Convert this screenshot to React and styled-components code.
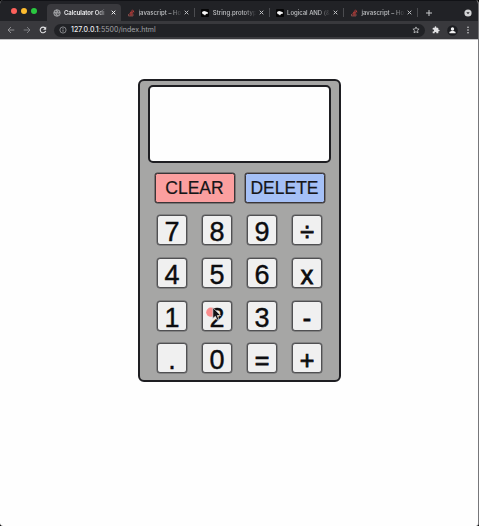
import React from 'react';
import styled, { createGlobalStyle } from 'styled-components';

const GlobalStyle = createGlobalStyle`
  * { box-sizing: border-box; }
  html, body { margin: 0; background: #000; overflow: hidden; }
`;

const Window = styled.div`
  width: 479px;
  height: 526px;
  display: flex;
  flex-direction: column;
  overflow: hidden;
  border-radius: 4px 4px 3px 3px;
  background: #fefefe;
  border-right: 1px solid #77777a;
  font-family: Inter, "Liberation Sans", sans-serif;
`;

const TabStrip = styled.header`
  height: 21px;
  flex: none;
  display: flex;
  align-items: flex-end;
  background: #212226;
  border-top: 1px solid #111216;
`;

const Lights = styled.div`
  width: 47px;
  height: 20px;
  padding: 0 0 1px 10.5px;
  display: flex;
  align-items: center;
  gap: 4px;
`;

const Light = styled.i`
  width: 6px;
  height: 6px;
  border-radius: 50%;
  background: ${(p) => p.$color};
`;

const TabItem = styled.div`
  width: ${(p) => (p.$active ? '74px' : '74.3px')};
  height: 17px;
  padding-left: ${(p) => (p.$active ? '5.5px' : '6px')};
  display: flex;
  align-items: center;
  flex: none;
  border-radius: 4px 4px 0 0;
  background: ${(p) => (p.$active ? '#39393d' : 'transparent')};
  color: ${(p) => (p.$active ? '#f0f0f2' : '#bfc0c3')};
`;

const TabTitle = styled.span`
  width: 45px;
  margin-left: 3.5px;
  white-space: nowrap;
  font-size: 6px;
  font-weight: ${(p) => (p.$active ? 600 : 500)};
  line-height: 10px;
  letter-spacing: ${(p) => p.$spacing || '0'};
  mask-image: linear-gradient(to right, #000 72%, transparent 98%);
`;

const CloseIcon = styled.svg`
  width: 5px;
  height: 5px;
  margin-left: 1.5px;
  flex: none;
`;

const Separator = styled.i`
  width: 1px;
  height: 9px;
  margin-left: 5px;
  background: #4b4c50;
`;

const Icon = styled.svg`
  width: ${(p) => p.$size || 8}px;
  height: ${(p) => p.$size || 8}px;
  flex: none;
  display: block;
`;

const StripEnd = styled.div`
  flex: 1;
  height: 17px;
  display: flex;
  align-items: center;
  justify-content: space-between;
  padding: 0 6px 0 7px;
`;

const Toolbar = styled.nav`
  height: 18px;
  flex: none;
  display: flex;
  align-items: center;
  padding: 0 6px 0 7px;
  background: #39393d;
`;

const NavIcons = styled.div`
  display: flex;
  gap: 8px;
  width: 47px;
`;

const AddressBar = styled.div`
  width: 371px;
  height: 13px;
  display: flex;
  align-items: center;
  padding: 0 5px;
  border-radius: 7px;
  background: #212226;
`;

const Url = styled.span`
  flex: 1;
  margin-left: 4px;
  font-size: 7px;
  line-height: 12px;
  letter-spacing: 0.06px;
  color: #a3a4a8;
`;

const Host = styled.span`
  color: #ececee;
  font-weight: 500;
`;

const Actions = styled.div`
  flex: 1;
  display: flex;
  align-items: center;
  justify-content: space-between;
  padding-left: 7px;
`;

const Page = styled.main`
  flex: 1;
  padding: 39px 0 0 138px;
  border-top: 1px solid #c4c4c6;
`;

const Calculator = styled.section`
  width: 203px;
  height: 303px;
  display: flex;
  flex-direction: column;
  align-items: center;
  padding-top: 4px;
  border: 2px solid #1e1e22;
  border-radius: 6px;
  background: #a6a6a5;
  font-family: "Liberation Sans", Arial, sans-serif;
`;

const Display = styled.div`
  width: 183px;
  height: 78px;
  flex: none;
  border: 2px solid #1e1e22;
  border-radius: 5px;
  background: #fefefe;
`;

const Commands = styled.div`
  display: flex;
  gap: 10px;
  margin-top: 9.5px;
`;

const Command = styled.button`
  width: 80px;
  height: 30px;
  padding: 0;
  border: 1px solid #3a3537;
  border-radius: 2.5px;
  background: ${(p) => p.$color};
  color: #161618;
  font: 17.5px/28px "Liberation Sans", Arial, sans-serif;
  -webkit-text-stroke: 0.2px #161618;
  box-shadow: 0 0 0 0.5px #4a4648;
`;

const Keypad = styled.div`
  display: grid;
  grid-template-columns: repeat(4, 30px);
  grid-auto-rows: 30px;
  gap: 12.8px 15px;
  margin-top: 12.5px;
`;

const Key = styled.button`
  position: relative;
  padding: 2px 0 0;
  border: 1px solid #505052;
  border-radius: 3px;
  background: #f0f0f0;
  color: #0c0c0e;
  font: ${(p) => (p.$operator ? '25px' : '27px')}/28px "Liberation Sans", Arial, sans-serif;
  -webkit-text-stroke: ${(p) => (p.$operator ? '0.8px' : '0.4px')} #0c0c0e;
  box-shadow: 0 0 0 0.5px #606062;
`;

const Pointer = styled.svg`
  position: absolute;
  left: 2px;
  top: 4px;
  width: 18px;
  height: 20px;
`;

function Globe() {
  return (
    <Icon viewBox="0 0 16 16">
      <circle cx="8" cy="8" r="6.5" fill="#5c5d61" stroke="#b4b5b8" strokeWidth="1.6" />
      <path d="M2 6l4 2 1 3 2 3M6 2l3 2-2 3 4 1 3-2" fill="none" stroke="#b4b5b8" strokeWidth="1.8" />
    </Icon>
  );
}

function Stack() {
  return (
    <Icon viewBox="0 0 16 16">
      <path d="M3 10v4h9v-4" fill="none" stroke="#8e5351" strokeWidth="1.6" />
      <path d="M5 12h5.5M5 9.3l6 .8M6 6.3l5.5 2M8 3.4l4.5 4M11 1.5l3 5" stroke="#d8433f" strokeWidth="1.7" />
    </Icon>
  );
}

function Mdn() {
  return (
    <Icon viewBox="0 0 16 16">
      <rect width="16" height="16" rx="2" fill="#050506" />
      <path d="M2 6l4-2 4 1 4 2v2l-4 1-2 3-2-2-3-1z" fill="#f5f5f6" />
    </Icon>
  );
}

const favicons = { globe: Globe, stack: Stack, mdn: Mdn };

function Tab({ icon, title, active, spacing }) {
  const Favicon = favicons[icon];
  return (
    <TabItem $active={active}>
      <Favicon />
      <TabTitle $spacing={spacing} $active={active}>{title}</TabTitle>
      <CloseIcon viewBox="0 0 5 5">
        <path d="M.7.7l3.6 3.6M4.3.7L.7 4.3" stroke="currentColor" strokeWidth="1" />
      </CloseIcon>
      {!active && <Separator />}
    </TabItem>
  );
}

const keys = ['7', '8', '9', '÷', '4', '5', '6', 'x', '1', '2', '3', '-', '.', '0', '=', '+'];
const operators = '÷x-=+';

export default function App() {
  return (
    <>
      <GlobalStyle />
      <Window>
        <TabStrip>
          <Lights>
            <Light $color="#fc605b" />
            <Light $color="#fdbc2f" />
            <Light $color="#2ac840" />
          </Lights>
          <Tab icon="globe" title="Calculator Odi" active spacing="-0.05px" />
          <Tab icon="stack" title="javascript – Ho" spacing="0.03px" />
          <Tab icon="mdn" title="String.prototyp" spacing="0.03px" />
          <Tab icon="mdn" title="Logical AND (&" spacing="-0.03px" />
          <Tab icon="stack" title="javascript – Ho" spacing="0.03px" />
          <StripEnd>
            <Icon viewBox="0 0 8 8">
              <path d="M4 1v6M1 4h6" stroke="#c9cacc" strokeWidth="1" />
            </Icon>
            <Icon viewBox="0 0 8 8">
              <circle cx="4" cy="4" r="3.6" fill="#d2d3d5" />
              <path d="M2.3 3.2h3.4L4 5.2z" fill="#242529" />
            </Icon>
          </StripEnd>
        </TabStrip>
        <Toolbar>
          <NavIcons>
            <Icon viewBox="0 0 8 8">
              <path d="M7.3 4H1M4 1L1 4l3 3" fill="none" stroke="#98999c" strokeWidth=".9" />
            </Icon>
            <Icon viewBox="0 0 8 8">
              <path d="M.7 4H7M4 1l3 3-3 3" fill="none" stroke="#85868a" strokeWidth=".9" />
            </Icon>
            <Icon viewBox="0 0 8 8">
              <path d="M6.2 2.2A2.8 2.8 0 1 0 6.7 4.8" fill="none" stroke="#e3e3e5" strokeWidth="1.1" />
              <path d="M7.2.6v3.1H4.1z" fill="#e3e3e5" />
            </Icon>
          </NavIcons>
          <AddressBar>
            <Icon viewBox="0 0 8 8">
              <circle cx="4" cy="4" r="3.1" fill="none" stroke="#9d9ea2" strokeWidth=".8" />
              <path d="M4 3.5v2.2M4 2.1v.8" stroke="#b0b1b4" strokeWidth=".8" />
            </Icon>
            <Url>
              <Host>127.0.0.1</Host>:5500/index.html
            </Url>
            <Icon viewBox="0 0 8 8">
              <path d="M4 .9l.9 2 2.2.2-1.6 1.5.5 2.2L4 5.7 2 6.8l.5-2.2L.9 3.1l2.2-.2z" fill="none" stroke="#c5c6c8" strokeWidth=".8" />
            </Icon>
          </AddressBar>
          <Actions>
            <Icon viewBox="0 0 24 24">
              <path fill="#e2e2e4" d="M20.5 11H19V7a2 2 0 0 0-2-2h-4V3.5a2.5 2.5 0 0 0-5 0V5H4a2 2 0 0 0-2 2v3.8h1.5a2.7 2.7 0 0 1 0 5.4H2V20a2 2 0 0 0 2 2h3.8v-1.5a2.7 2.7 0 0 1 5.4 0V22H17a2 2 0 0 0 2-2v-4h1.5a2.5 2.5 0 0 0 0-5z" />
            </Icon>
            <Icon $size={11} viewBox="0 0 11 11">
              <circle cx="5.5" cy="5.5" r="5.3" fill="#1c1d21" />
              <circle cx="5.5" cy="4" r="1.7" fill="#f1f1f2" />
              <path d="M2.4 8.3V7.5c0-2 6.2-2 6.2 0v.8z" fill="#f1f1f2" />
            </Icon>
            <Icon viewBox="0 0 8 8">
              <circle cx="4" cy="1.3" r=".8" fill="#d6d6d8" />
              <circle cx="4" cy="4" r=".8" fill="#d6d6d8" />
              <circle cx="4" cy="6.7" r=".8" fill="#d6d6d8" />
            </Icon>
          </Actions>
        </Toolbar>
        <Page>
          <Calculator>
            <Display />
            <Commands>
              <Command $color="#fb9f9f">CLEAR</Command>
              <Command $color="#a5c0f6">DELETE</Command>
            </Commands>
            <Keypad>
              {keys.map((k) => (
                <Key key={k} $operator={operators.includes(k)}>
                  {k}
                  {k === '2' && (
                    <Pointer viewBox="0 0 18 20">
                      <circle cx="5.8" cy="6.2" r="4.6" fill="#fb8d8d" />
                      <path d="M7.8 1.5v11l2.6-2.2 1.8 3.9 1.8-.8-1.7-3.8h3.4z" fill="#111114" stroke="#e9e9ea" strokeWidth=".7" />
                    </Pointer>
                  )}
                </Key>
              ))}
            </Keypad>
          </Calculator>
        </Page>
      </Window>
    </>
  );
}
